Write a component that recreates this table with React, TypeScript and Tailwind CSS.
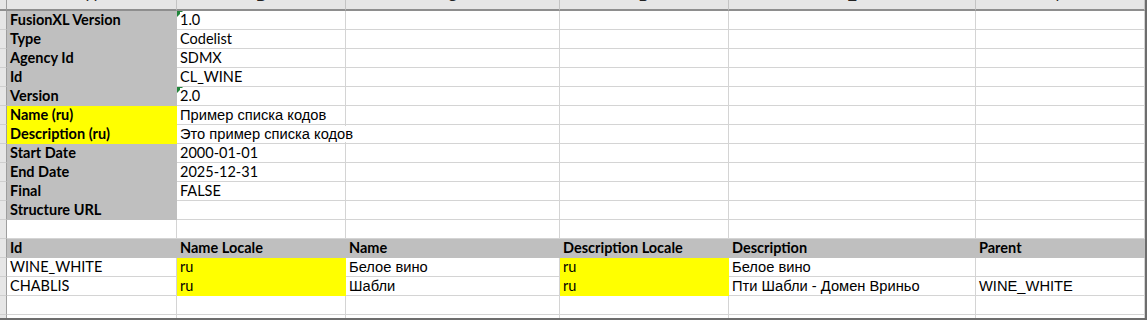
import React from 'react';

type Fill = 'gray' | 'yellow' | undefined;

interface CellData {
  text?: string;
  bold?: boolean;
  fill?: Fill;
  arial?: boolean;
  flag?: boolean;
}

const calibri = "font-['Lato','Liberation_Sans',sans-serif] text-[14.5px]";
const arial = "font-['Liberation_Sans','Arial',sans-serif] text-[14.7px]";

const columns = ['A', 'B', 'C', 'D', 'E', 'F'];

const meta: [string, CellData][] = [
  ['FusionXL Version', { text: '1.0', flag: true }],
  ['Type', { text: 'Codelist' }],
  ['Agency Id', { text: 'SDMX' }],
  ['Id', { text: 'CL_WINE' }],
  ['Version', { text: '2.0', flag: true }],
  ['Name (ru)', { text: 'Пример списка кодов', arial: true }],
  ['Description (ru)', { text: 'Это пример списка кодов', arial: true }],
  ['Start Date', { text: '2000-01-01' }],
  ['End Date', { text: '2025-12-31' }],
  ['Final', { text: 'FALSE' }],
  ['Structure URL', {}],
];

const codeHeader = ['Id', 'Name Locale', 'Name', 'Description Locale', 'Description', 'Parent'];

const codes = [
  { id: 'WINE_WHITE', name: 'Белое вино', desc: 'Белое вино', parent: '' },
  { id: 'CHABLIS', name: 'Шабли', desc: 'Пти Шабли - Домен Вриньо', parent: 'WINE_WHITE' },
];

function Cell({ text, bold, fill, arial: useArial, flag }: CellData) {
  const bg =
    fill === 'gray'
      ? 'bg-[#bfbfbf] border-[#bfbfbf]'
      : fill === 'yellow'
        ? 'bg-[#ffff00] border-[#ffff00]'
        : 'bg-white border-[#d4d4d4]';
  return (
    <div className={`relative flex items-end border-r border-b pl-[3px] pb-[1px] ${bg}`}>
      {flag && (
        <svg className="absolute left-0 top-0" width="6" height="6" viewBox="0 0 6 6">
          <polygon points="0,0 6,0 0,6" fill="#20853a" />
        </svg>
      )}
      {text && (
        <span
          className={`relative z-10 whitespace-nowrap leading-[16px] text-black ${useArial ? arial : calibri} ${
            bold ? 'font-bold' : ''
          } ${fill ? '' : 'bg-white'}`}
        >
          {text}
        </span>
      )}
    </div>
  );
}

function RowHead() {
  return <div className="border-r border-b border-r-[#9e9e9e] border-b-[#cfcfcf] bg-[#e6e6e6]" />;
}

export default function App() {
  const rows: CellData[][] = [];

  meta.forEach(([label, value]) => {
    const yellow = label.endsWith('(ru)');
    const row: CellData[] = [{ text: label, bold: true, fill: yellow ? 'yellow' : 'gray' }, value];
    while (row.length < 6) row.push({});
    rows.push(row);
  });

  rows.push([{}, {}, {}, {}, {}, {}]);
  rows.push(codeHeader.map((h) => ({ text: h, bold: true, fill: 'gray' as Fill })));
  codes.forEach((c) => {
    rows.push([
      { text: c.id },
      { text: 'ru', fill: 'yellow' },
      { text: c.name, arial: true },
      { text: 'ru', fill: 'yellow' },
      { text: c.desc, arial: true },
      { text: c.parent, arial: true },
    ]);
  });
  rows.push([{}, {}, {}, {}, {}, {}]);
  rows.push([{}, {}, {}, {}, {}, {}]);

  return (
    <div className="h-[320px] w-[1147px] overflow-hidden border-r-2 border-b-2 border-[#6d6d6d] bg-white">
      <div className="grid grid-cols-[7px_170px_169px_214px_169px_247px_169px] auto-rows-[19px] grid-rows-[11px]">
        {/* column letters, mostly scrolled out of view */}
        <div className="border-r border-b-2 border-r-[#9e9e9e] border-b-[#8e8e8e] bg-[#e6e6e6]" />
        {columns.map((c) => (
          <div
            key={c}
            className="flex items-end justify-center overflow-hidden border-r border-b-2 border-r-[#c4c4c4] border-b-[#8e8e8e] bg-[#e6e6e6] pb-[6px]"
          >
            <span className="font-['Liberation_Sans',sans-serif] text-[15px] leading-none text-[#222]">{c}</span>
          </div>
        ))}

        {rows.map((row, i) => (
          <React.Fragment key={i}>
            <RowHead />
            {row.map((cell, j) => (
              <Cell key={j} {...cell} />
            ))}
          </React.Fragment>
        ))}
      </div>
    </div>
  );
}
